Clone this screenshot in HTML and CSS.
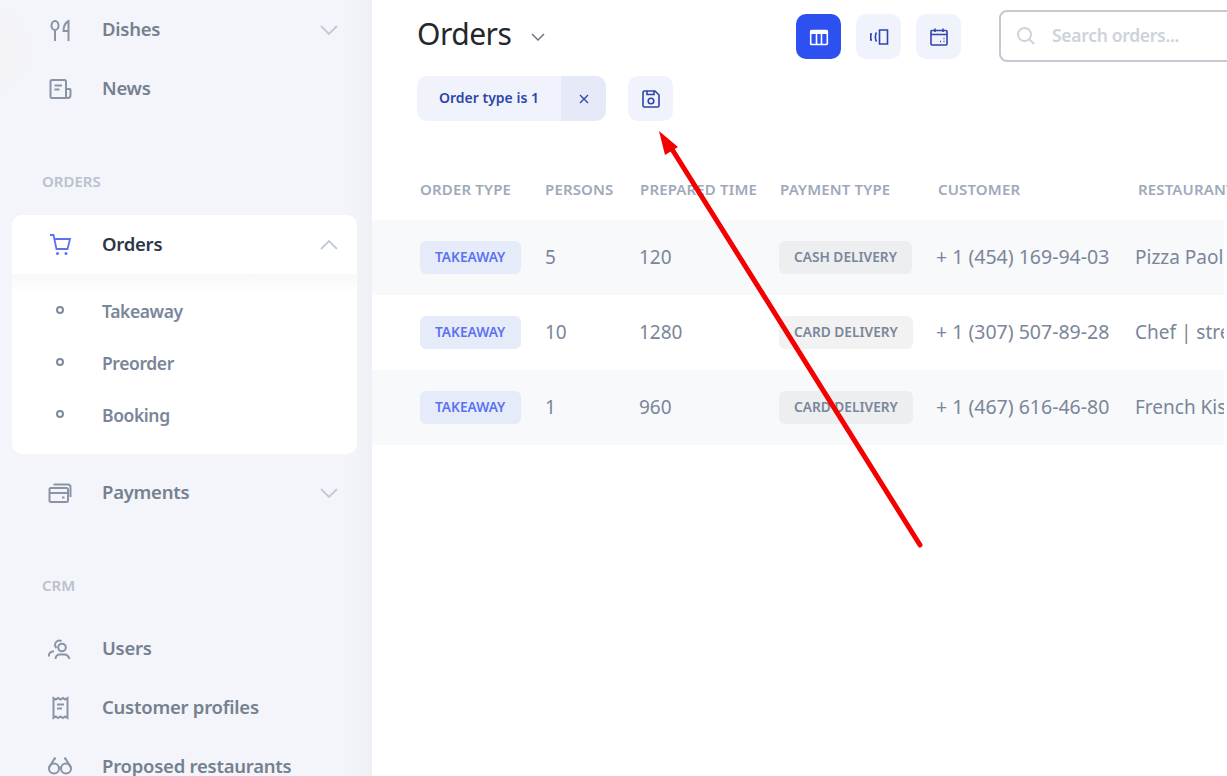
FILE: index.html
```html
<!DOCTYPE html>
<html lang="en">
<head>
    <meta charset="UTF-8">
    <title>Orders</title>
    <link rel="stylesheet" href="styles.css">
</head>
<body>
    <aside class="sidebar">
        <a class="nav-item">
            <svg class="nav-icon" viewBox="0 0 24 24"><path d="M7 3c-2 0-3.500 2-3.500 4.500S5 12 7 12s3.500-2 3.500-4.500S9 3 7 3zM7 12v11M20.500 23V3c-3 1.500-5 5-5 10h5"/></svg>
            <span class="nav-label">Dishes</span>
            <svg class="nav-chevron" viewBox="0 0 18 10"><path d="M1 1l8 8 8-8"/></svg>
        </a>
        <a class="nav-item">
            <svg class="nav-icon" viewBox="0 0 24 24"><path d="M18 21H4a1.500 1.500 0 0 1-1.500-1.500v-15A1.500 1.500 0 0 1 4 3h12.500A1.500 1.500 0 0 1 18 4.500V21zm0-9h3.500a1 1 0 0 1 1 1v5a3 3 0 0 1-3 3H18M6.500 8.500h7.500M6.500 12.500h5"/></svg>
            <span class="nav-label">News</span>
        </a>

        <div class="nav-title nav-title-orders">ORDERS</div>

        <div class="nav-card">
            <a class="nav-item active">
                <svg class="nav-icon" viewBox="0 0 24 24"><path d="M2 2h3.500l3 14h11l2.500-10H6.500"/><circle cx="9.500" cy="20.500" r="1.500" class="dot"/><circle cx="18" cy="20.500" r="1.500" class="dot"/></svg>
                <span class="nav-label">Orders</span>
                <svg class="nav-chevron" viewBox="0 0 18 10"><path d="M1 9l8-8 8 8"/></svg>
            </a>
            <ul class="subnav">
                <li><i></i>Takeaway</li>
                <li><i></i>Preorder</li>
                <li><i></i>Booking</li>
            </ul>
        </div>

        <a class="nav-item nav-item-payments">
            <svg class="nav-icon" viewBox="0 0 24 24"><rect x="1.500" y="7" width="18.500" height="14" rx="1.500"/><path d="M1.500 12h18.500M14 16.500h2.500M5.500 3.500h14.500a2.500 2.500 0 0 1 2.500 2.500v10"/></svg>
            <span class="nav-label">Payments</span>
            <svg class="nav-chevron" viewBox="0 0 18 10"><path d="M1 1l8 8 8-8"/></svg>
        </a>

        <div class="nav-title nav-title-crm">CRM</div>

        <a class="nav-item">
            <svg class="nav-icon" viewBox="0 0 24 24"><circle cx="14" cy="10.500" r="3.800"/><path d="M7.500 22c0-3 2-4.500 4-4.500h5c2 0 4 1.500 5 4.500M13.500 4A4.500 4.500 0 0 0 7 7.500c0 1.500.5 2.500 1.500 3.500M6 14.500H5c-2 0-4 2-4.500 5"/></svg>
            <span class="nav-label">Users</span>
        </a>
        <a class="nav-item">
            <svg class="nav-icon" viewBox="0 0 24 24"><path d="M5.500 2l2.300 1.500L10 2l2.500 1.500L15 2l2.200 1.500L19.500 2v20l-2.300-1.500L15 22l-2.500-1.500L10 22l-2.200-1.500L5.500 22zM9 8.500h7M9 12.500h5"/></svg>
            <span class="nav-label">Customer profiles</span>
        </a>
        <a class="nav-item">
            <svg class="nav-icon" viewBox="0 0 24 24"><circle cx="6" cy="13.500" r="5"/><circle cx="18" cy="13.500" r="5"/><path d="M11 13c.6-.6 1.400-.6 2 0M1.200 12.500L6.500 3.500h1.500M22.800 12.500L17.500 3.500H16"/></svg>
            <span class="nav-label">Proposed restaurants</span>
        </a>
    </aside>

    <main class="content">
        <header class="topbar">
            <h1>Orders</h1>
            <svg class="title-chevron" viewBox="0 0 14 8"><path d="M1 1l6 6 6-6"/></svg>
            <div class="views">
                <button class="icon-btn selected">
                    <svg viewBox="0 0 20 20"><path d="M2.500 3.500h15a.8.8 0 0 1 .8.8v12.400a.8.8 0 0 1-.8.8h-15a.8.8 0 0 1-.8-.8V4.300a.8.8 0 0 1 .8-.8zM7.500 7v10.500M12.500 7v10.500"/><path class="band" d="M1.700 3.500h16.600v3.500H1.700z"/></svg>
                </button>
                <button class="icon-btn">
                    <svg viewBox="0 0 20 20"><path d="M10.500 3h8v14h-8zM7.500 5.500c-1.500 2-1.500 7 0 9M3 7H1.800v6H3"/></svg>
                </button>
                <button class="icon-btn">
                    <svg viewBox="0 0 20 20"><path d="M3 3.500h14a1 1 0 0 1 1 1v12.500a1 1 0 0 1-1 1H3a1 1 0 0 1-1-1V4.500a1 1 0 0 1 1-1zM2 7.500h16M6 1.500v3.500M14 1.500v3.500M11 14.500h1M14.500 14.500h1M14.500 11.500h1"/></svg>
                </button>
            </div>
            <div class="search">
                <svg viewBox="0 0 20 20"><circle cx="8.500" cy="8.500" r="6.500"/><path d="M13.500 13.500L18 18"/></svg>
                <span>Search orders...</span>
            </div>
        </header>

        <div class="filters">
            <div class="chip">
                <span class="chip-text">Order type is 1</span>
                <span class="chip-close"><svg viewBox="0 0 10 10"><path d="M1 1l8 8M9 1l-8 8"/></svg></span>
            </div>
            <button class="icon-btn">
                <svg viewBox="0 0 20 20"><path d="M3.500 2H14l4 4v10.500a1.500 1.500 0 0 1-1.500 1.500h-13A1.500 1.500 0 0 1 2 16.500v-13A1.500 1.500 0 0 1 3.500 2zM6 2v3.500h7V2"/><circle cx="10" cy="12" r="2.800"/></svg>
            </button>
        </div>

        <table class="orders">
            <thead>
                <tr>
                    <th>ORDER TYPE</th>
                    <th>PERSONS</th>
                    <th>PREPARED TIME</th>
                    <th>PAYMENT TYPE</th>
                    <th>CUSTOMER</th>
                    <th>RESTAURANT</th>
                </tr>
            </thead>
            <tbody>
                <tr>
                    <td><span class="badge blue">TAKEAWAY</span></td>
                    <td>5</td>
                    <td>120</td>
                    <td><span class="badge grey">CASH DELIVERY</span></td>
                    <td>+ 1 (454) 169-94-03</td>
                    <td>Pizza Paolo</td>
                </tr>
                <tr>
                    <td><span class="badge blue">TAKEAWAY</span></td>
                    <td>10</td>
                    <td>1280</td>
                    <td><span class="badge grey">CARD DELIVERY</span></td>
                    <td>+ 1 (307) 507-89-28</td>
                    <td>Chef | street</td>
                </tr>
                <tr>
                    <td><span class="badge blue">TAKEAWAY</span></td>
                    <td>1</td>
                    <td>960</td>
                    <td><span class="badge grey">CARD DELIVERY</span></td>
                    <td>+ 1 (467) 616-46-80</td>
                    <td>French Kiss</td>
                </tr>
            </tbody>
        </table>
    </main>

    <!-- annotation drawn on top of the screenshot -->
    <svg class="arrow" viewBox="0 0 1227 776">
        <path class="arrow-line" d="M920 545L670 146"/>
        <path class="arrow-head" d="M659 131L678 147L665 155z"/>
    </svg>
</body>
</html>
```
FILE: styles.css
```css
* {
    margin: 0;
    padding: 0;
    box-sizing: border-box;
}

html, body {
    height: 100%;
    overflow: hidden;
}

body {
    display: flex;
    position: relative;
    background-color: #fff;
    color: #7a8699;
    font-family: "Noto Sans", "Open Sans", sans-serif;
}

svg {
    display: block;
    flex-shrink: 0;
    fill: none;
    stroke: currentColor;
}

/* sidebar */
.sidebar {
    flex: 0 0 372px;
    height: 776px;
    overflow: hidden;
    background:
        radial-gradient(circle at -20px 50px, rgba(255, 232, 232, 0.3), rgba(255, 232, 232, 0) 55px),
        linear-gradient(to right, #f3f5fa 0, #f3f5fa 345px, #eff0f5 372px);
}

.nav-item {
    display: flex;
    align-items: center;
    height: 59px;
    padding: 0 34px 0 48px;
    color: #75818f;
    font-size: 18.5px;
    font-weight: 600;
    letter-spacing: -0.25px;
}

.nav-icon {
    flex: 0 0 24px;
    width: 24px;
    height: 24px;
    stroke: #8a94a6;
    stroke-width: 2;
}

.nav-label {
    flex: 1;
    margin-left: 30px;
    padding-bottom: 2px;
}

.nav-chevron {
    width: 18px;
    height: 10px;
    stroke: #c3cad6;
    stroke-width: 1.800;
}

.nav-title {
    padding-left: 42px;
    color: #b9c1cf;
    font-size: 15px;
    font-weight: 600;
    line-height: 20px;
}

.nav-title-orders {
    margin-top: 53px;
}

.nav-title-crm {
    margin-top: 53px;
    margin-bottom: 24px;
}

.nav-card {
    height: 239px;
    margin: 24px 15px 0 12px;
    overflow: hidden;
    background-color: #fff;
    border-radius: 10px;
}

.nav-card .nav-item {
    padding: 0 19px 0 36px;
    color: #2b3648;
}

.nav-card .nav-icon {
    stroke: #5a72f2;
    stroke-width: 1.800;
}

.nav-card .dot {
    fill: #5a72f2;
    stroke: none;
}

.subnav {
    padding-top: 11px;
    background: linear-gradient(#f8f8f9, #fff 18px);
    list-style: none;
}

.subnav li {
    display: flex;
    align-items: center;
    height: 52px;
    padding-left: 44px;
    color: #7a8699;
    font-size: 17.5px;
    font-weight: 600;
    letter-spacing: -0.4px;
}

.subnav i {
    width: 8px;
    height: 8px;
    margin-right: 38px;
    margin-top: -2px;
    border: 2px solid #7e8a9b;
    border-radius: 50%;
}

.nav-item-payments {
    margin-top: 9px;
}

/* main */
.content {
    flex: 1;
    min-width: 0;
    overflow: hidden;
}

.topbar {
    display: flex;
    align-items: flex-start;
    height: 72px;
    padding-left: 45px;
}

.topbar h1 {
    flex-shrink: 0;
    width: 94px;
    margin-top: 14px;
    color: #24272c;
    font-size: 30px;
    font-weight: 400;
    letter-spacing: -0.5px;
    line-height: 40px;
}

.title-chevron {
    width: 14px;
    height: 8px;
    margin-top: 33px;
    margin-left: 20px;
    stroke: #6f7887;
    stroke-width: 1.500;
}

.views {
    display: flex;
    flex-shrink: 0;
    gap: 15px;
    margin-top: 14px;
    margin-left: 251px;
}

.icon-btn {
    display: flex;
    flex-shrink: 0;
    align-items: center;
    justify-content: center;
    width: 45px;
    height: 45px;
    border: none;
    border-radius: 10px;
    background-color: #f0f3fc;
    color: #2f45a8;
}

.icon-btn svg {
    width: 20px;
    height: 20px;
    stroke-width: 1.600;
}

.icon-btn .band {
    fill: currentColor;
    stroke: none;
}

.icon-btn.selected {
    background-color: #2d50f0;
    color: #fff;
}

.search {
    display: flex;
    flex: 0 0 300px;
    align-items: center;
    height: 52px;
    margin-top: 10px;
    margin-left: 38px;
    padding-bottom: 2px;
    padding-left: 15px;
    border: 2px solid #c4c8d0;
    border-radius: 8px;
    color: #cdd2dc;
    font-size: 17.5px;
    font-weight: 600;
    letter-spacing: -0.3px;
}

.search svg {
    width: 20px;
    height: 20px;
    margin-right: 16px;
    margin-top: 2px;
    stroke-width: 2;
}

.filters {
    display: flex;
    gap: 22px;
    margin-top: 4px;
    padding-left: 45px;
}

.chip {
    display: flex;
    width: 189px;
    height: 45px;
    overflow: hidden;
    border-radius: 10px;
    background-color: #f0f3fc;
    color: #2f45a8;
    font-size: 14px;
    font-weight: 600;
}

.chip-text {
    flex: 1;
    padding-left: 22px;
    line-height: 43px;
}

.chip-close {
    display: flex;
    align-items: center;
    justify-content: center;
    width: 45px;
    background-color: #e6eaf8;
}

.chip-close svg {
    width: 10px;
    height: 10px;
    stroke-width: 1.300;
}

/* table */
.orders {
    width: 855px;
    margin-top: 44px;
    table-layout: fixed;
    border-collapse: collapse;
}

.orders th:nth-child(1) { width: 173px; padding-left: 48px; }
.orders th:nth-child(2) { width: 95px; }
.orders th:nth-child(3) { width: 140px; }
.orders th:nth-child(4) { width: 158px; }
.orders th:nth-child(5) { width: 200px; }
.orders th:nth-child(6) { width: 89px; }

.orders th {
    height: 55px;
    padding-bottom: 8px;
    overflow: hidden;
    color: #9fa9bb;
    font-size: 15px;
    font-weight: 600;
    letter-spacing: 0.15px;
    text-align: left;
    white-space: nowrap;
}

.orders td {
    height: 75px;
    padding-bottom: 2px;
    overflow: hidden;
    color: #7a8699;
    font-size: 19px;
    white-space: nowrap;
}

.orders td:first-child {
    padding-left: 48px;
    padding-bottom: 0;
}

.orders td:nth-child(4) {
    padding-bottom: 0;
}

.orders td:nth-child(5) {
    font-size: 19.5px;
}

.orders td:nth-child(n+3) {
    position: relative;
    left: -1px;
}

.orders td:nth-child(n+5) {
    left: -2px;
}

.orders td:nth-child(6) {
    left: -3px;
}

.orders tbody tr:nth-child(odd) {
    background-color: #f8f9fb;
}

.badge {
    display: inline-block;
    height: 33px;
    padding: 0 15px;
    border-radius: 6px;
    font-size: 13.7px;
    font-weight: 600;
    line-height: 32px;
    vertical-align: middle;
}

.badge.blue {
    padding: 0 15.5px 0 15px;
    background-color: #e6ebf9;
    color: #5a72f2;
}

.badge.grey {
    background-color: #eceef0;
    color: #7a8699;
}

.orders tbody tr:nth-child(even) .badge.grey {
    background-color: #f2f2f3;
}

/* annotation */
.arrow {
    position: absolute;
    left: 0;
    top: 0;
    width: 1227px;
    height: 776px;
    pointer-events: none;
}

.arrow-line {
    stroke: #f50000;
    stroke-width: 5;
    stroke-linecap: round;
}

.arrow-head {
    fill: #f50000;
    stroke: none;
}
```
